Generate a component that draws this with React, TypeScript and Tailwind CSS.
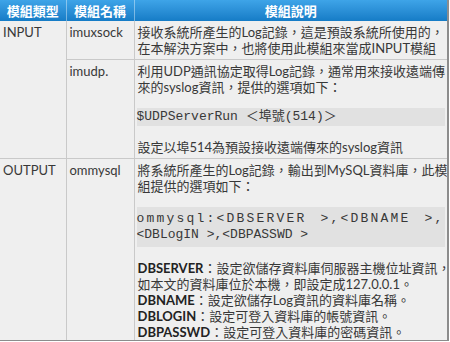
const cjk = "font-['Lato','Noto_Sans_CJK_TC',sans-serif]"
const mono = "font-['Liberation_Mono','Noto_Sans_CJK_TC',monospace]"

function Lines({ lines }: { lines: string[] }) {
  return (
    <div>
      {lines.map((l) => (
        <div key={l} className="whitespace-nowrap">
          {l}
        </div>
      ))}
    </div>
  )
}

function Def({ label, text }: { label: string; text: string }) {
  return (
    <div className="whitespace-nowrap">
      <span className="font-bold text-[#222]">{label}</span>
      {text}
    </div>
  )
}

export default function App() {
  const th = "h-[21px] p-0 text-center font-bold text-white text-[13px] border-r border-white/40 last:border-r-0"
  const td = "align-top px-[3px] py-[3px] border border-[#c9c9c9]"

  return (
    <div className={`w-[450px] h-[342px] bg-white ${cjk} text-[13px] leading-[16px] text-[#383838]`}>
      <div className="w-[449px] h-[341px] bg-[#efefef] border-r-2 border-b border-[#8c8c8c] overflow-hidden">
        <table className="w-full border-collapse table-fixed">
          <colgroup>
            <col className="w-[66px]" />
            <col className="w-[68px]" />
            <col />
          </colgroup>
          <thead>
            <tr className="bg-gradient-to-b from-[#3ea4e8] to-[#157cc6]">
              <th className={th}>模組類型</th>
              <th className={th}>模組名稱</th>
              <th className={th}>模組說明</th>
            </tr>
          </thead>
          <tbody>
            <tr>
              <td rowSpan={2} className={`${td} border-t-0 border-l-0`}>INPUT</td>
              <td className={`${td} border-t-0`}>imuxsock</td>
              <td className={`${td} border-t-0 border-r-0`}>
                <Lines
                  lines={[
                    '接收系統所產生的Log記錄，這是預設系統所使用的，',
                    '在本解決方案中，也將使用此模組來當成INPUT模組',
                  ]}
                />
              </td>
            </tr>
            <tr>
              <td className={td}>imudp.</td>
              <td className={`${td} border-r-0`}>
                <Lines
                  lines={[
                    '利用UDP通訊協定取得Log記錄，通常用來接收遠端傳',
                    '來的syslog資訊，提供的選項如下：',
                  ]}
                />
                <div className={`${mono} mt-[13px] -mx-[1px] py-[1px] bg-[#e1e1e1] whitespace-pre`}>
                  $UDPServerRun ＜埠號(514)＞
                </div>
                <div className="mt-[13px] whitespace-nowrap">設定以埠514為預設接收遠端傳來的syslog資訊</div>
              </td>
            </tr>
            <tr>
              <td className={`${td} border-l-0 border-b-0`}>OUTPUT</td>
              <td className={`${td} border-b-0`}>ommysql</td>
              <td className={`${td} border-r-0 border-b-0`}>
                <Lines
                  lines={[
                    '將系統所產生的Log記錄，輸出到MySQL資料庫，此模',
                    '組提供的選項如下：',
                  ]}
                />
                <div className={`${mono} mt-[13px] -mx-[1px] py-[4px] bg-[#e1e1e1] whitespace-pre`}>
                  <div className="tracking-[2.2px] [word-spacing:4px]">ommysql:&lt;DBSERVER &gt;,&lt;DBNAME &gt;,</div>
                  <div>&lt;DBLogIN &gt;,&lt;DBPASSWD &gt;</div>
                </div>
                <div className="mt-[13px]">
                  <Def label="DBSERVER" text="：設定欲儲存資料庫伺服器主機位址資訊，" />
                  <div className="whitespace-nowrap">如本文的資料庫位於本機，即設定成127.0.0.1。</div>
                  <Def label="DBNAME" text="：設定欲儲存Log資訊的資料庫名稱。" />
                  <Def label="DBLOGIN" text="：設定可登入資料庫的帳號資訊。" />
                  <Def label="DBPASSWD" text="：設定可登入資料庫的密碼資訊。" />
                </div>
              </td>
            </tr>
          </tbody>
        </table>
      </div>
    </div>
  )
}
